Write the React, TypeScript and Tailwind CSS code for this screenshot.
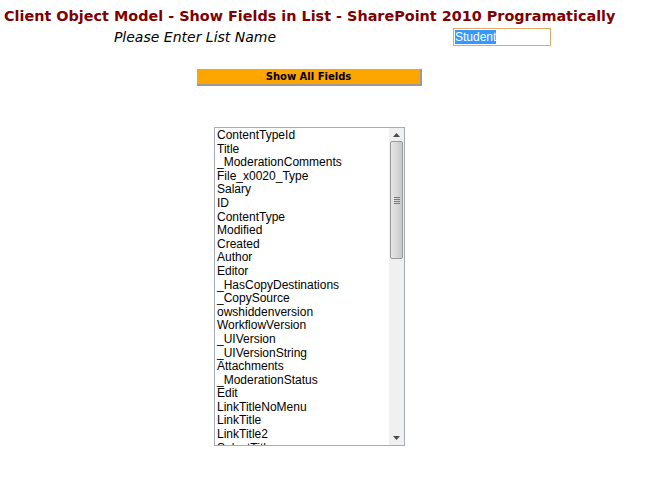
import React from "react";

const fields = [
  "ContentTypeId",
  "Title",
  "_ModerationComments",
  "File_x0020_Type",
  "Salary",
  "ID",
  "ContentType",
  "Modified",
  "Created",
  "Author",
  "Editor",
  "_HasCopyDestinations",
  "_CopySource",
  "owshiddenversion",
  "WorkflowVersion",
  "_UIVersion",
  "_UIVersionString",
  "Attachments",
  "_ModerationStatus",
  "Edit",
  "LinkTitleNoMenu",
  "LinkTitle",
  "LinkTitle2",
  "SelectTitle",
];

function FieldList() {
  return (
    <div className="ml-[214px] mt-[41px] flex h-[319px] w-[191px] border border-[#a5acb5] bg-white">
      <div className="flex-1 overflow-hidden pl-[2px] pt-[1px] font-['Liberation_Sans',Arial,sans-serif] text-[12px] leading-[13.6px] text-black">
        {fields.map((f) => (
          <div key={f} className="whitespace-nowrap">
            {f}
          </div>
        ))}
      </div>
      {/* classic scrollbar */}
      <div className="flex w-[15px] flex-col bg-[#f0f0f0]">
        <div className="flex h-[13px] items-center justify-center">
          <svg width="7" height="4" viewBox="0 0 7 4">
            <path d="M3.5 0 L7 4 L0 4 Z" fill="#4a4a4a" />
          </svg>
        </div>
        <div className="mx-[1px] flex h-[118px] items-center justify-center rounded-[2px] border border-[#9a9a9a] bg-gradient-to-r from-[#e6e6e6] via-[#d8d8d8] to-[#c8c8c8]">
          <div className="flex flex-col gap-[1px]">
            <div className="h-[1px] w-[6px] bg-[#7a7a7a]" />
            <div className="h-[1px] w-[6px] bg-[#7a7a7a]" />
            <div className="h-[1px] w-[6px] bg-[#7a7a7a]" />
            <div className="h-[1px] w-[6px] bg-[#7a7a7a]" />
          </div>
        </div>
        <div className="flex-1" />
        <div className="flex h-[14px] items-center justify-center">
          <svg width="7" height="4" viewBox="0 0 7 4">
            <path d="M0 0 L7 0 L3.5 4 Z" fill="#4a4a4a" />
          </svg>
        </div>
      </div>
    </div>
  );
}

export default function App() {
  return (
    <div className="h-[480px] w-[650px] overflow-hidden bg-white font-['DejaVu_Sans',Verdana,sans-serif]">
      <h1 className="pl-[4px] pt-[7px] text-[14.4px] font-bold leading-[18px] text-[#800000]">
        Client Object Model - Show Fields in List - SharePoint 2010 Programatically
      </h1>

      <div className="mt-[3px] flex items-center">
        <div className="w-[390px] text-center text-[14px] italic leading-[18px] text-black">
          Please Enter List Name
        </div>
        <div className="ml-[63px] flex h-[18px] w-[98px] items-center border border-[#e3a868] bg-white pl-[1px]">
          <span className="bg-[#3399ff] font-['Liberation_Sans',Arial,sans-serif] text-[12px] leading-[14px] text-white">
            Student
          </span>
        </div>
      </div>

      <div className="ml-[197px] mt-[23px] flex h-[17px] w-[225px] items-center justify-center border-b-2 border-r-2 border-[#9a9a9a] bg-[#ffa500] text-[10px] font-bold text-black">
        Show All Fields
      </div>

      <FieldList />
    </div>
  );
}
